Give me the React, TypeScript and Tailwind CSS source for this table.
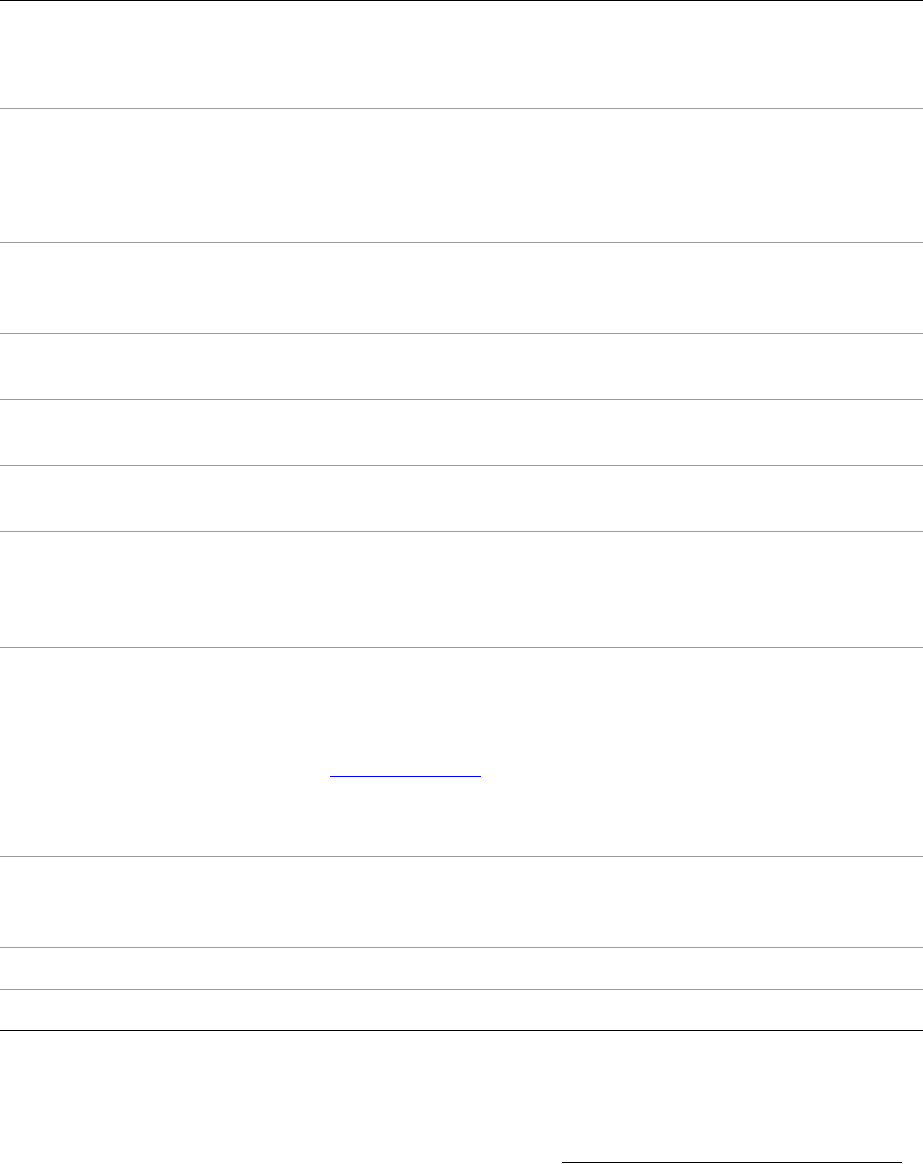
const rows = [108, 134, 91, 66, 66, 66, 116, 209, 91, 42, 40];

const App = () => {
  return (
    <div className="min-h-[1164px] w-full bg-white font-['Liberation_Sans',Arial,sans-serif] text-sm text-black">
      {/* Table block: black rule top and bottom, grey rules between rows */}
      <div className="divide-y divide-[#9a9a9a] border-y border-black">
        {rows.map((h, i) => (
          <div key={i} className="w-full" style={{ height: h }}>
            {i === 7 && (
              <div className="pl-[330px] pt-[128px]">
                <a href="#" className="block h-[1px] w-[151px] bg-[#0000ff]" aria-label="link" />
              </div>
            )}
          </div>
        ))}
      </div>

      {/* Signature line */}
      <div className="ml-[562px] mt-[131px] h-[1px] w-[340px] bg-black" />
    </div>
  );
};

export default App;
